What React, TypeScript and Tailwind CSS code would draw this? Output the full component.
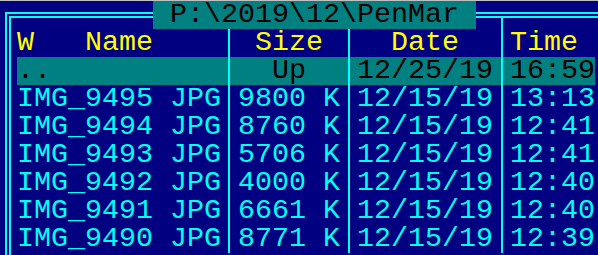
const files = [
  ["IMG_9495 JPG", "9800 K", "12/15/19", "13:13"],
  ["IMG_9494 JPG", "8760 K", "12/15/19", "12:41"],
  ["IMG_9493 JPG", "5706 K", "12/15/19", "12:41"],
  ["IMG_9492 JPG", "4000 K", "12/15/19", "12:40"],
  ["IMG_9491 JPG", "6661 K", "12/15/19", "12:40"],
  ["IMG_9490 JPG", "8771 K", "12/15/19", "12:39"],
];

function Sep({ off = 8 }: { off?: number }) {
  return (
    <div className="h-full w-[17px] shrink-0">
      <div className={`h-full w-[2px] bg-[#00ffff] ${off === 7 ? "ml-[7px]" : "ml-[8px]"}`} />
    </div>
  );
}

function Row({ cells, className = "" }: { cells: string[]; className?: string }) {
  return (
    <div className={`flex h-[28px] shrink-0 ${className}`}>
      <div className="w-[204px] shrink-0 whitespace-pre">{cells[0]}</div>
      <Sep off={7} />
      <div className="w-[102px] shrink-0 whitespace-pre">{cells[1]}</div>
      <Sep />
      <div className="w-[136px] shrink-0 whitespace-pre">{cells[2]}</div>
      <Sep />
      <div className="w-[85px] shrink-0 whitespace-pre">{cells[3]}</div>
    </div>
  );
}

export default function App() {
  return (
    <div className="relative h-[255px] w-[598px] overflow-hidden border-t border-[#c0c0c0] bg-[#000080] font-['Liberation_Mono',monospace] text-[28.33px] leading-[28px]">
      <div className="ml-[5px] mt-[11px] w-[700px] border-l-2 border-t-2 border-[#00ffff] pl-[2px] pt-[2px]">
        <div className="h-[300px] border-l-2 border-t-2 border-[#00ffff] pl-[6px]">
          <div className="flex h-[11px]">
            <div className="w-[204px] shrink-0" />
            <Sep off={7} />
            <div className="w-[102px] shrink-0" />
            <Sep />
            <div className="w-[136px] shrink-0" />
            <Sep />
          </div>
          <Row cells={["W   Name", " Size", "  Date", "Time"]} className="text-[#ffff00]" />
          <Row cells={["..", "  Up", "12/25/19", "16:59"]} className="w-[578px] bg-[#008080] text-black" />
          {files.map((f) => (
            <Row key={f[0]} cells={f} className="text-[#00ffff]" />
          ))}
        </div>
      </div>
      {/* path title sits over the double frame line */}
      <div className="absolute left-[153px] top-0 h-[28px] w-[323px] whitespace-pre bg-[#008080] text-black">
        {" P:\\2019\\12\\PenMar "}
      </div>
    </div>
  );
}
